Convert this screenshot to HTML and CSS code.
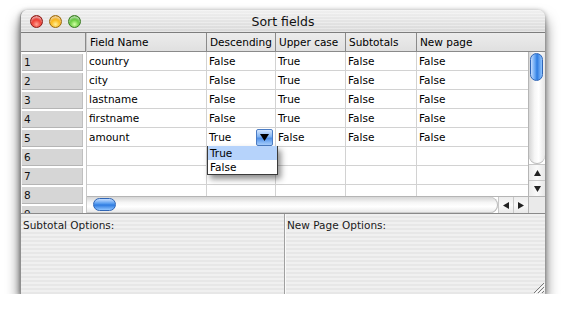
FILE: index.html
```html
<!DOCTYPE html>
<html>
<head>
  <title>Sort fields</title>
  <link rel="stylesheet" href="styles.css">
</head>
<body>
  <div class="window">
    <div class="titlebar">
      <div class="lights">
        <span class="light red"></span>
        <span class="light yellow"></span>
        <span class="light green"></span>
      </div>
      <div class="title">Sort fields</div>
      <div></div>
    </div>

    <div class="tablearea">
      <div class="rowheads">
        <div class="corner"></div>
        <div class="rh">1</div>
        <div class="rh">2</div>
        <div class="rh">3</div>
        <div class="rh">4</div>
        <div class="rh">5</div>
        <div class="rh">6</div>
        <div class="rh">7</div>
        <div class="rh">8</div>
        <div class="rh">9</div>
      </div>

      <div class="center">
        <div class="colheads">
          <div class="ch">Field Name</div>
          <div class="ch">Descending</div>
          <div class="ch">Upper case</div>
          <div class="ch">Subtotals</div>
          <div class="ch">New page</div>
        </div>
        <div class="body">
          <div class="row"><div class="cell">country</div><div class="cell">False</div><div class="cell">True</div><div class="cell">False</div><div class="cell">False</div></div>
          <div class="row"><div class="cell">city</div><div class="cell">False</div><div class="cell">True</div><div class="cell">False</div><div class="cell">False</div></div>
          <div class="row"><div class="cell">lastname</div><div class="cell">False</div><div class="cell">True</div><div class="cell">False</div><div class="cell">False</div></div>
          <div class="row"><div class="cell">firstname</div><div class="cell">False</div><div class="cell">True</div><div class="cell">False</div><div class="cell">False</div></div>
          <div class="row">
            <div class="cell">amount</div>
            <div class="cell editing">True
              <span class="combo-btn">
                <svg width="9" height="7" viewBox="0 0 9 7"><path d="M0 0 L9 0 L4.5 7 Z" fill="#000"/></svg>
              </span>
              <div class="combo-list">
                <div class="opt selected">True</div>
                <div class="opt">False</div>
              </div>
            </div>
            <div class="cell">False</div><div class="cell">False</div><div class="cell">False</div>
          </div>
          <div class="row"><div class="cell"></div><div class="cell"></div><div class="cell"></div><div class="cell"></div><div class="cell"></div></div>
          <div class="row"><div class="cell"></div><div class="cell"></div><div class="cell"></div><div class="cell"></div><div class="cell"></div></div>
          <div class="row"><div class="cell"></div><div class="cell"></div><div class="cell"></div><div class="cell"></div><div class="cell"></div></div>
        </div>
        <div class="hscroll">
          <div class="htrack"><div class="hthumb"></div></div>
          <div class="arrow"><svg width="6" height="7" viewBox="0 0 6 7"><path d="M6 0 L6 7 L0 3.5 Z" fill="#222"/></svg></div>
          <div class="arrow"><svg width="6" height="7" viewBox="0 0 6 7"><path d="M0 0 L0 7 L6 3.5 Z" fill="#222"/></svg></div>
        </div>
      </div>

      <div class="vcol">
        <div class="vcorner"></div>
        <div class="vscroll">
          <div class="vtrack"><div class="vthumb"></div></div>
          <div class="varrow"><svg width="7" height="6" viewBox="0 0 7 6"><path d="M0 6 L7 6 L3.5 0 Z" fill="#222"/></svg></div>
          <div class="varrow"><svg width="7" height="6" viewBox="0 0 7 6"><path d="M0 0 L7 0 L3.5 6 Z" fill="#222"/></svg></div>
        </div>
        <div class="scorner"></div>
      </div>
    </div>

    <div class="panels">
      <div class="panel">Subtotal Options:</div>
      <div class="panel right">New Page Options:</div>
    </div>

    <div class="grip">
      <svg width="14" height="14" viewBox="0 0 14 14">
        <path d="M13 3 L3 13 M13 7 L7 13 M13 11 L11 13" stroke="#7a7a7a" stroke-width="1"/>
        <path d="M14 4 L4 14 M14 8 L8 14" stroke="#fff" stroke-width="1"/>
      </svg>
    </div>
  </div>
</body>
</html>
```

FILE: styles.css
```css
body {
  margin: 0;
  background: #fff;
  font-family: "DejaVu Sans", sans-serif;
  font-size: 10.5px;
  color: #000;
}

.window {
  position: relative;
  margin: 10px 0 0 20px;
  width: 524px;
  border-left: 1px solid #8f8f8f;
  border-radius: 7px 7px 0 0;
  background: #ececec;
  box-shadow: 0 9px 14px rgba(0, 0, 0, 0.6), 0 1px 5px rgba(0, 0, 0, 0.4);
  overflow: hidden;
}

/* title bar */
.titlebar {
  height: 22px;
  display: grid;
  grid-template-columns: 1fr auto 1fr;
  align-items: center;
  background:
    repeating-linear-gradient(rgba(255,255,255,0.35) 0 1px, transparent 1px 3px),
    linear-gradient(#f0f0f0, #d9d9d9);
  border-bottom: 1px solid #7d7d7d;
}

.lights {
  display: flex;
  gap: 6px;
  padding-left: 9px;
}

.light {
  width: 13px;
  height: 13px;
  border-radius: 50%;
  box-sizing: border-box;
}

.red {
  background: radial-gradient(circle at 50% 75%, #ffa494 0, #ef3b30 45%, #b01010 100%);
  border: 1px solid #8a1a14;
  box-shadow: inset 0 2px 2px rgba(255,255,255,0.6);
}

.yellow {
  background: radial-gradient(circle at 50% 75%, #fff09a 0, #fbb817 45%, #c07300 100%);
  border: 1px solid #9a6a10;
  box-shadow: inset 0 2px 2px rgba(255,255,255,0.6);
}

.green {
  background: radial-gradient(circle at 50% 75%, #d2ffa4 0, #66cc3e 45%, #2a8612 100%);
  border: 1px solid #3a7a22;
  box-shadow: inset 0 2px 2px rgba(255,255,255,0.6);
}

.title {
  font-size: 12.5px;
  color: #111;
}

/* table */
.tablearea {
  display: flex;
  height: 180px;
  background: #fff;
}

.rowheads {
  width: 65px;
  overflow: hidden;
  flex: none;
  background: #fff;
}

.corner {
  height: 18px;
  background: #e3e3e3;
  border-bottom: 1px solid #8a8a8a;
  border-right: 1px solid #8a8a8a;
}

.rh {
  height: 19px;
  box-sizing: border-box;
  margin-right: 3px;
  padding: 1px 0 0 2px;
  line-height: 15px;
  background: #d6d6d6;
  border-top: 2px solid #fff;
  border-left: 1px solid #f4f4f4;
  box-shadow: inset 0 -1px 0 #b5b5b5, inset -1px 0 0 #c0c0c0;
  color: #111;
}

.center {
  width: 442px;
  flex: none;
  display: flex;
  flex-direction: column;
  border-left: 1px solid #c8c8c8;
  box-sizing: border-box;
}

.colheads,
.row {
  display: grid;
  grid-template-columns: 120px 69px 70px 71px 111px;
}

.ch {
  height: 19px;
  box-sizing: border-box;
  padding-left: 3px;
  line-height: 18px;
  background: linear-gradient(#ececec, #e0e0e0);
  border-right: 1px solid #8a8a8a;
  border-bottom: 1px solid #8a8a8a;
}

.ch:last-child {
  border-right: none;
}

.body {
  height: 145px;
  overflow: hidden;
}

.cell {
  height: 19px;
  box-sizing: border-box;
  padding-left: 2px;
  line-height: 19px;
  border-right: 1px solid #d2d2d2;
  border-bottom: 1px solid #d2d2d2;
}

.cell:last-child {
  border-right: none;
}

.editing {
  position: relative;
}

.combo-btn {
  position: absolute;
  right: 2px;
  top: 1px;
  width: 17px;
  height: 17px;
  box-sizing: border-box;
  border: 1px solid #4b7cc4;
  border-radius: 2px;
  background: linear-gradient(#d5e7ff, #7fb2f2 45%, #4f8fe6 55%, #a9d0ff);
  display: flex;
  align-items: center;
  justify-content: center;
}

.combo-list {
  position: absolute;
  left: 0;
  top: 18px;
  width: 69px;
  background: #fff;
  border: 1px solid #3a3a3a;
  border-top: none;
  box-shadow: 3px 4px 6px rgba(0, 0, 0, 0.45);
  z-index: 2;
}

.opt {
  height: 14px;
  line-height: 14px;
  padding-left: 2px;
}

.opt.selected {
  background: #b6d3fb;
}

/* horizontal scrollbar */
.hscroll {
  height: 16px;
  display: flex;
  border-top: 1px solid #b5b5b5;
  background: #fff;
}

.htrack {
  flex: 1;
  padding: 1px 0 0 6px;
  border-radius: 0 8px 8px 0;
  background: linear-gradient(#d6d6d6, #f6f6f6 35%, #ffffff 60%, #e6e6e6);
  box-shadow: inset -1px 0 0 #bbb, inset 0 -1px 0 #ccc;
}

.hthumb {
  width: 23px;
  height: 13px;
  box-sizing: border-box;
  border-radius: 7px;
  border: 1px solid #2f65b5;
  background: linear-gradient(#c4dcff, #5a9ef0 40%, #2e7be0 55%, #8fc4ff);
}

.arrow {
  width: 14px;
  display: flex;
  align-items: center;
  justify-content: center;
  border-left: 1px solid #c8c8c8;
  background: linear-gradient(#ececec, #fafafa 50%, #e8e8e8);
}

/* vertical scrollbar */
.vcol {
  width: 17px;
  flex: none;
  display: flex;
  flex-direction: column;
}

.vcorner {
  height: 19px;
  box-sizing: border-box;
  background: linear-gradient(#ececec, #e0e0e0);
  border-bottom: 1px solid #8a8a8a;
}

.vscroll {
  height: 145px;
  display: flex;
  flex-direction: column;
  border-left: 1px solid #b5b5b5;
}

.vtrack {
  flex: 1;
  padding: 1px 0 0 1px;
  border-radius: 0 0 8px 8px;
  background: linear-gradient(to right, #d6d6d6, #f6f6f6 35%, #ffffff 60%, #e6e6e6);
  box-shadow: inset 0 -1px 0 #bbb;
}

.vthumb {
  width: 13px;
  height: 28px;
  box-sizing: border-box;
  border-radius: 7px;
  border: 1px solid #2f65b5;
  background: linear-gradient(to right, #c4dcff, #5a9ef0 40%, #2e7be0 55%, #8fc4ff);
}

.varrow {
  height: 15px;
  display: flex;
  align-items: center;
  justify-content: center;
  border-top: 1px solid #c8c8c8;
  background: linear-gradient(to right, #ececec, #fafafa 50%, #e8e8e8);
}

.scorner {
  height: 16px;
  background: #eaeaea;
  border-top: 1px solid #b5b5b5;
  border-left: 1px solid #b5b5b5;
}

/* bottom option panels */
.panels {
  display: grid;
  grid-template-columns: 263px 1fr;
  height: 81px;
  border-top: 1px solid #8a8a8a;
  box-sizing: border-box;
}

.panel {
  padding: 4px 0 0 2px;
  line-height: 14px;
  color: #1a1a1a;
  background: repeating-linear-gradient(#f0f0f0 0 2px, #e7e7e7 2px 4px);
}

.panel.right {
  border-left: 1px solid #a0a0a0;
  box-shadow: inset 1px 0 0 #fafafa;
}

.grip {
  position: absolute;
  right: 0;
  bottom: 0;
  width: 14px;
  height: 14px;
}
```
